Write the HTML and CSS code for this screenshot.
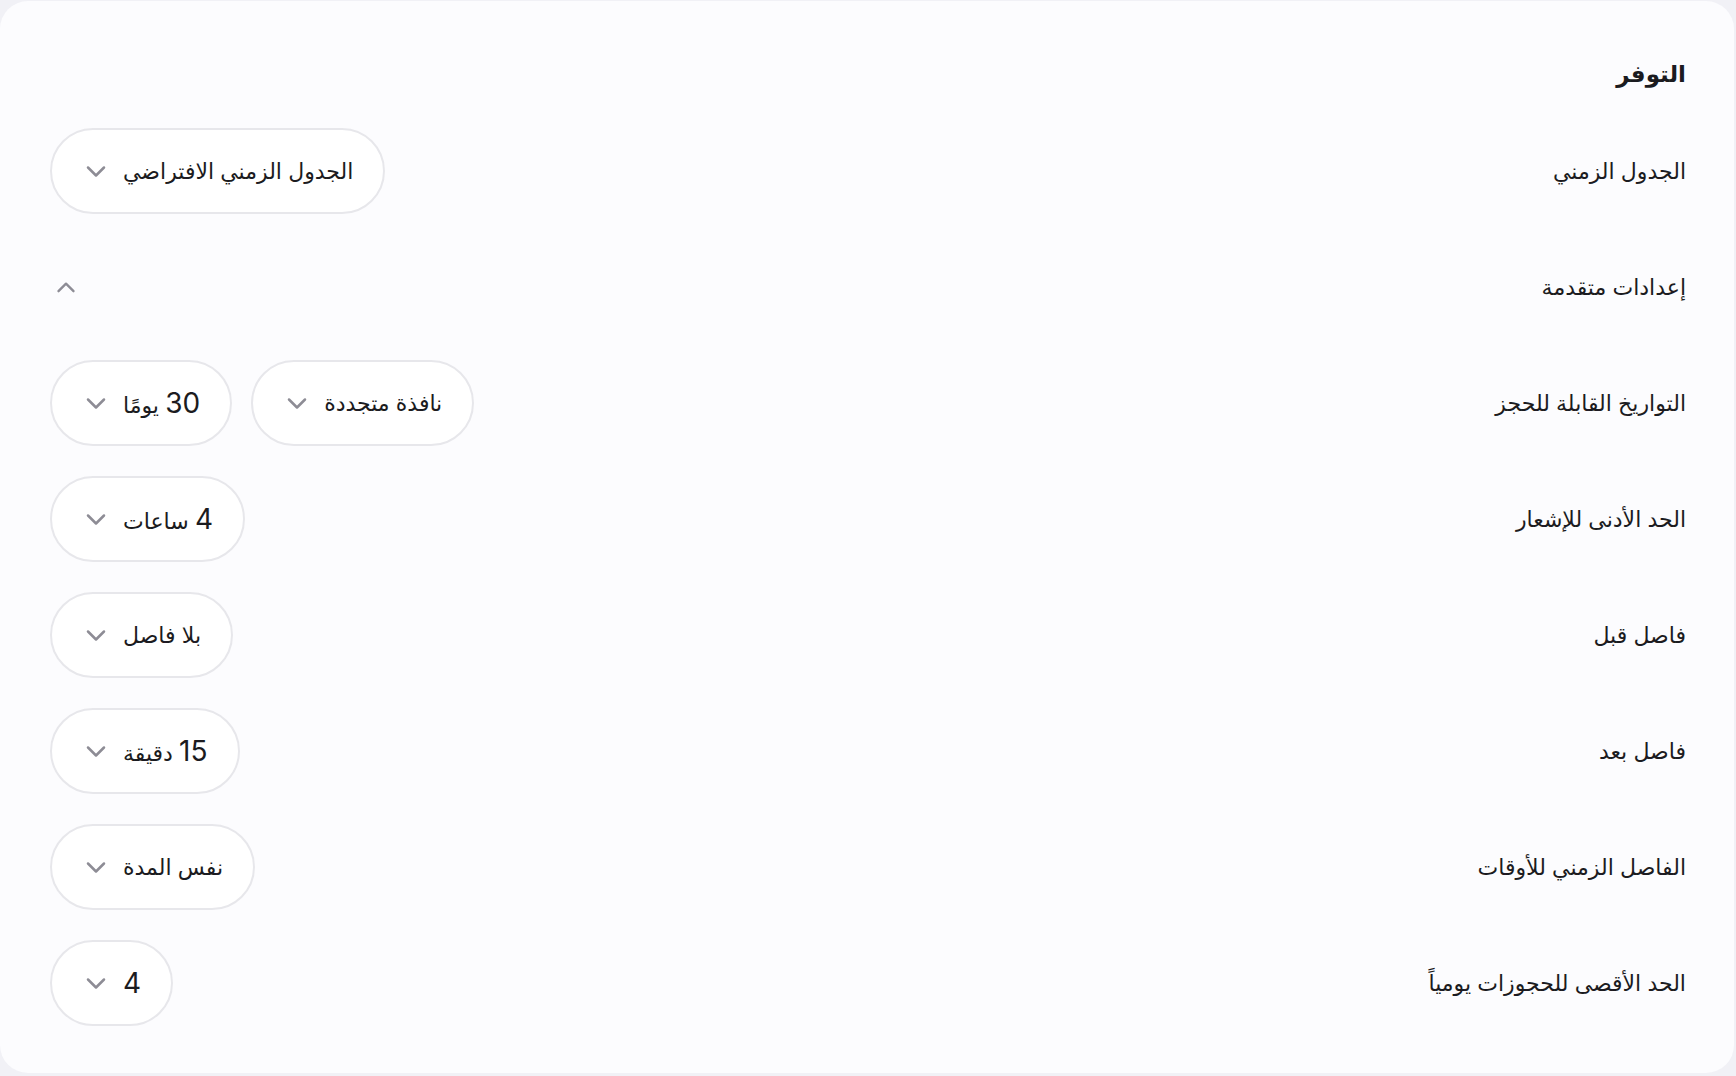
FILE: index.html
```html
<!DOCTYPE html>
<html lang="ar" dir="rtl">
<head>
<meta charset="utf-8">
<link rel="stylesheet" href="styles.css">
</head>
<body>
<div class="card">
  <h2 class="title">التوفر</h2>
  <div class="rows">
    <div class="row">
      <span class="label">الجدول الزمني</span>
      <div class="controls">
        <div class="pill"><span class="val">الجدول الزمني الافتراضي</span><svg class="chev" viewBox="0 0 24 24"><path d="M4 8.5L12 16.5L20 8.5"/></svg></div>
      </div>
    </div>
    <div class="row">
      <span class="label">إعدادات متقدمة</span>
      <div class="controls">
        <svg class="chev-up" viewBox="0 0 24 24"><path d="M3 17L12 8L21 17"/></svg>
      </div>
    </div>
    <div class="row">
      <span class="label">التواريخ القابلة للحجز</span>
      <div class="controls">
        <div class="pill"><span class="val">نافذة متجددة</span><svg class="chev" viewBox="0 0 24 24"><path d="M4 8.5L12 16.5L20 8.5"/></svg></div>
        <div class="pill"><span class="val"><span class="num">30</span> يومًا</span><svg class="chev" viewBox="0 0 24 24"><path d="M4 8.5L12 16.5L20 8.5"/></svg></div>
      </div>
    </div>
    <div class="row">
      <span class="label">الحد الأدنى للإشعار</span>
      <div class="controls">
        <div class="pill"><span class="val"><span class="num">4</span> ساعات</span><svg class="chev" viewBox="0 0 24 24"><path d="M4 8.5L12 16.5L20 8.5"/></svg></div>
      </div>
    </div>
    <div class="row">
      <span class="label">فاصل قبل</span>
      <div class="controls">
        <div class="pill"><span class="val">بلا فاصل</span><svg class="chev" viewBox="0 0 24 24"><path d="M4 8.5L12 16.5L20 8.5"/></svg></div>
      </div>
    </div>
    <div class="row">
      <span class="label">فاصل بعد</span>
      <div class="controls">
        <div class="pill"><span class="val"><span class="num">15</span> دقيقة</span><svg class="chev" viewBox="0 0 24 24"><path d="M4 8.5L12 16.5L20 8.5"/></svg></div>
      </div>
    </div>
    <div class="row">
      <span class="label">الفاصل الزمني للأوقات</span>
      <div class="controls">
        <div class="pill"><span class="val">نفس المدة</span><svg class="chev" viewBox="0 0 24 24"><path d="M4 8.5L12 16.5L20 8.5"/></svg></div>
      </div>
    </div>
    <div class="row">
      <span class="label">الحد الأقصى للحجوزات يومياً</span>
      <div class="controls">
        <div class="pill"><span class="val"><span class="num">4</span></span><svg class="chev" viewBox="0 0 24 24"><path d="M4 8.5L12 16.5L20 8.5"/></svg></div>
      </div>
    </div>
  </div>
</div>
</body>
</html>
```

FILE: styles.css
```css
* { box-sizing: border-box; }
html, body { margin: 0; padding: 0; }
body {
  background: #f1f1f6;
  padding: 1px 2px 3px 0;
  font-family: Inter, "DejaVu Sans", sans-serif;
  color: #1b1b20;
}
.card {
  background: #fcfcfe;
  border-radius: 28px;
  height: 1072px;
  padding: 57px 48px 0 50px;
}
.title {
  margin: 0 0 38px 0;
  font-size: 23px;
  line-height: 32px;
  font-weight: 700;
}
.rows {
  display: flex;
  flex-direction: column;
  gap: 30px;
}
.row {
  height: 86px;
  display: flex;
  align-items: center;
  justify-content: space-between;
}
.label {
  font-size: 22px;
}
.controls {
  display: flex;
  align-items: center;
  gap: 19px;
}
.pill {
  height: 86px;
  display: flex;
  align-items: center;
  gap: 15px;
  padding: 0 30px 0 32px;
  background: #ffffff;
  border: 2px solid #e7e7eb;
  border-radius: 43px;
  font-size: 22px;
}
.num { font-size: 28px; font-weight: 400; }
.chev { width: 24px; height: 24px; fill: none; stroke: #8d8c95; stroke-width: 2.5; stroke-linecap: round; stroke-linejoin: round; }
.chev-up { width: 20px; height: 20px; margin-left: 6px; fill: none; stroke: #8d8c95; stroke-width: 2.8; stroke-linecap: round; stroke-linejoin: round; }
```
